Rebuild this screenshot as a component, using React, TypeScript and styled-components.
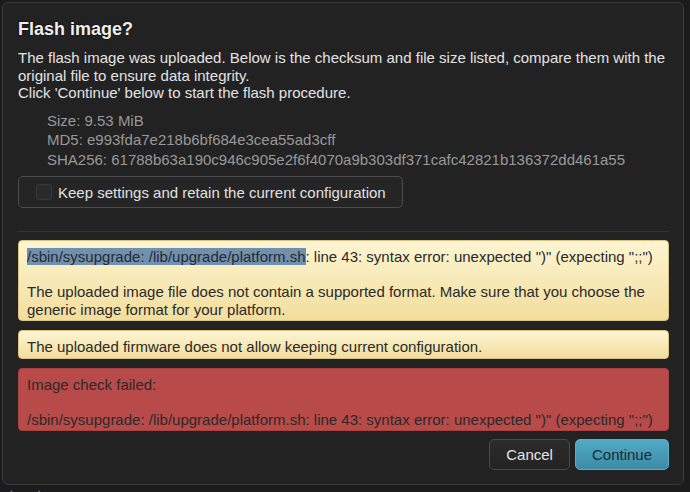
import React from "react";
import styled, { createGlobalStyle } from "styled-components";

const Global = createGlobalStyle`
  html, body { margin: 0; padding: 0; background: #1b1b1b; overflow: hidden; }
  body { font-family: "Liberation Sans", Arial, Helvetica, sans-serif; font-size: 15px; color: #ddd; }
  #root { width: 690px; height: 492px; overflow: hidden; }
`;

const Page = styled.div`
  display: flex;
  flex-direction: column;
  padding: 2px 6px 0 2px;
`;

const Modal = styled.div`
  background: #222;
  border: 1px solid #3b3b3b;
  border-radius: 6px;
  padding: 15px 14px 14px 15px;
  display: flex;
  flex-direction: column;
`;

const Title = styled.h3`
  margin: 0;
  font-size: 18px;
  line-height: 22px;
  font-weight: bold;
  color: #eee;
  text-shadow: 0 0 2px rgba(0, 0, 0, 0.9);
`;

const Para = styled.p`
  margin: 9px 0 0;
  line-height: 17.5px;
  color: #e2e2e2;
`;

const InfoList = styled.ul`
  list-style: none;
  margin: 9px 0 0;
  padding: 0 0 0 29px;
  line-height: 19.5px;
  color: #999;
`;

const CheckLabel = styled.label`
  align-self: flex-start;
  margin-top: 7px;
  height: 30px;
  display: inline-flex;
  align-items: center;
  gap: 6px;
  padding: 0 16px 0 17px;
  border: 1px solid #4c4c4c;
  border-radius: 5px;
  background: #252525;
  color: #e0e0e0;
`;

const Box = styled.span`
  width: 14px;
  height: 14px;
  border: 1px solid #383838;
  border-radius: 3px;
  background: #2a2a2a;
`;

const Rule = styled.hr`
  margin: 23px 0 8px;
  border: 0;
  border-top: 1px solid #363636;
  height: 0;
`;

const Alert = styled.div<{ $kind: "warn" | "danger" }>`
  margin-bottom: 9px;
  padding: 7px 8px 2px;
  border-radius: 4px;
  line-height: 17.5px;
  color: #2a2a2a;
  border: 1px solid ${(p) => (p.$kind === "warn" ? "#d8c383" : "#a64240")};
  background: ${(p) =>
    p.$kind === "warn" ? "linear-gradient(#fdf5d2, #f2dd9c)" : "#b84b49"};
  white-space: pre-line;
`;

const Selected = styled.span`
  background: #7090b0;
`;

const Actions = styled.div`
  display: flex;
  justify-content: flex-end;
  gap: 5px;
  margin-top: -1px;
`;

const Button = styled.button<{ $primary?: boolean }>`
  height: 31px;
  padding: 0 16px;
  font-family: "Liberation Sans", Arial, sans-serif;
  font-size: 15px;
  border-radius: 5px;
  color: ${(p) => (p.$primary ? "#1c2a30" : "#e4e4e4")};
  border: 1px solid ${(p) => (p.$primary ? "#5aaec8" : "#4a4a4a")};
  background: ${(p) =>
    p.$primary ? "linear-gradient(#52aac6, #3b8ba6)" : "linear-gradient(#2c2c2c, #232323)"};
`;

const Behind = styled.div`
  margin-top: 1px;
  font-size: 20px;
  color: #7a7a7a;
  text-indent: -30px;
  white-space: nowrap;
`;

export default function App() {
  return (
    <>
      <Global />
      <Page>
        <Modal>
          <Title>Flash image?</Title>
          <Para>
            The flash image was uploaded. Below is the checksum and file size listed, compare them with the
            original file to ensure data integrity.
            <br />
            Click 'Continue' below to start the flash procedure.
          </Para>
          <InfoList>
            <li>Size: 9.53 MiB</li>
            <li>MD5: e993fda7e218b6bf684e3cea55ad3cff</li>
            <li>SHA256: 61788b63a190c946c905e2f6f4070a9b303df371cafc42821b136372dd461a55</li>
          </InfoList>
          <CheckLabel>
            <Box />
            Keep settings and retain the current configuration
          </CheckLabel>
          <Rule />
          <Alert $kind="warn">
            <Selected>/sbin/sysupgrade: /lib/upgrade/platform.sh</Selected>
            {`: line 43: syntax error: unexpected ")" (expecting ";;")\n\nThe uploaded image file does not contain a supported format. Make sure that you choose the generic image format for your platform.`}
          </Alert>
          <Alert $kind="warn">The uploaded firmware does not allow keeping current configuration.</Alert>
          <Alert $kind="danger">
            {`Image check failed:\n\n/sbin/sysupgrade: /lib/upgrade/platform.sh: line 43: syntax error: unexpected ")" (expecting ";;")`}
          </Alert>
          <Actions>
            <Button>Cancel</Button>
            <Button $primary>Continue</Button>
          </Actions>
        </Modal>
        <Behind>Contents</Behind>
      </Page>
    </>
  );
}
